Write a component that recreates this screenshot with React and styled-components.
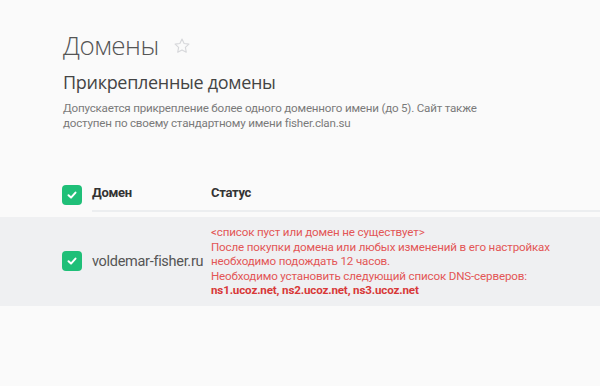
import styled, { createGlobalStyle } from "styled-components"

const GlobalStyle = createGlobalStyle`
  html, body {
    margin: 0;
    padding: 0;
    background: #fafafa;
    font-family: Roboto, "Open Sans", sans-serif;
  }
`;

const Page = styled.div`
  width: 600px;
  height: 386px;
  overflow: hidden;
  background: #fafafa;
  padding-top: 30px;
  box-sizing: border-box;
`;

const Intro = styled.div`
  padding-left: 63px;
`;

const TitleRow = styled.div`
  display: flex;
  align-items: center;
  gap: 14px;
`;

const Title = styled.h1`
  margin: 0;
  font-family: "Open Sans", sans-serif;
  font-weight: 300;
  font-size: 26px;
  line-height: 30px;
  color: #555;
  letter-spacing: -0.5px;
`;

const Star = styled.svg`
  width: 18px;
  height: 18px;
  margin-top: 1px;
`;

const Subtitle = styled.h2`
  margin: 10px 0 0;
  font-family: "Open Sans", sans-serif;
  font-weight: 400;
  font-size: 18px;
  line-height: 24px;
  color: #444;
  letter-spacing: -0.3px;
`;

const Note = styled.p`
  margin: 7px 0 0;
  width: 430px;
  font-size: 11.6px;
  line-height: 15px;
  color: #7a7a7a;
  letter-spacing: -0.2px;
`;

const Table = styled.div`
  margin-top: 46px;
`;

const HeadRow = styled.div`
  display: flex;
  align-items: center;
  height: 35px;
  padding-left: 62px;
`;

const HeadCells = styled.div`
  flex: 1;
  display: flex;
  align-items: center;
  align-self: stretch;
  margin-left: 10px;
  border-bottom: 2px solid #eceef0;
  padding-bottom: 3px;
`;

const HeadCell = styled.div`
  width: ${p => p.$w || "auto"};
  font-size: 13px;
  font-weight: 700;
  color: #333;
  letter-spacing: -0.3px;
  display: flex;
  align-items: center;
`;

const BodyRow = styled.div`
  margin-top: 5px;
  display: flex;
  align-items: center;
  background: #eff0f2;
  padding: 8px 0 8px 62px;
`;

const DomainCell = styled.div`
  width: 119px;
  margin-left: 10px;
  font-size: 14.5px;
  color: #555;
  letter-spacing: -0.3px;
`;

const StatusCell = styled.div`
  font-size: 11.6px;
  line-height: 14.5px;
  color: #e35656;
  letter-spacing: -0.15px;
`;

const Strong = styled.div`
  font-weight: 700;
  color: #d83838;
`;

const Box = styled.span`
  width: 20px;
  height: 20px;
  border-radius: 4px;
  background: #1fbf78;
  display: inline-flex;
  align-items: center;
  justify-content: center;
  flex-shrink: 0;
`;

const Check = () => (
  <Box>
    <svg width="12" height="12" viewBox="0 0 12 12">
      <path d="M2.5 6.3 L5 8.6 L9.5 3.6" fill="none" stroke="#fff" strokeWidth="2" strokeLinecap="round" strokeLinejoin="round" />
    </svg>
  </Box>
)

const App = () => {
  return (
    <Page>
      <GlobalStyle />
      <Intro>
        <TitleRow>
          <Title>Домены</Title>
          <Star viewBox="0 0 24 24">
            <path d="M12 2.8l2.8 5.9 6.4.8-4.7 4.4 1.2 6.4L12 17.2l-5.7 3.1 1.2-6.4-4.7-4.4 6.4-.8z" fill="none" stroke="#d6d7da" strokeWidth="1.5" strokeLinejoin="round" />
          </Star>
        </TitleRow>
        <Subtitle>Прикрепленные домены</Subtitle>
        <Note>
          Допускается прикрепление более одного доменного имени (до 5). Сайт также доступен по своему стандартному имени fisher.clan.su
        </Note>
      </Intro>
      <Table>
        <HeadRow>
          <Check />
          <HeadCells>
            <HeadCell $w="119px">Домен</HeadCell>
            <HeadCell>Статус</HeadCell>
          </HeadCells>
        </HeadRow>
        <BodyRow>
          <Check />
          <DomainCell>voldemar-fisher.ru</DomainCell>
          <StatusCell>
            <div>&lt;список пуст или домен не существует&gt;</div>
            <div>После покупки домена или любых изменений в его настройках</div>
            <div>необходимо подождать 12 часов.</div>
            <div>Необходимо установить следующий список DNS-серверов:</div>
            <Strong>ns1.ucoz.net, ns2.ucoz.net, ns3.ucoz.net</Strong>
          </StatusCell>
        </BodyRow>
      </Table>
    </Page>
  )
}

export default App
